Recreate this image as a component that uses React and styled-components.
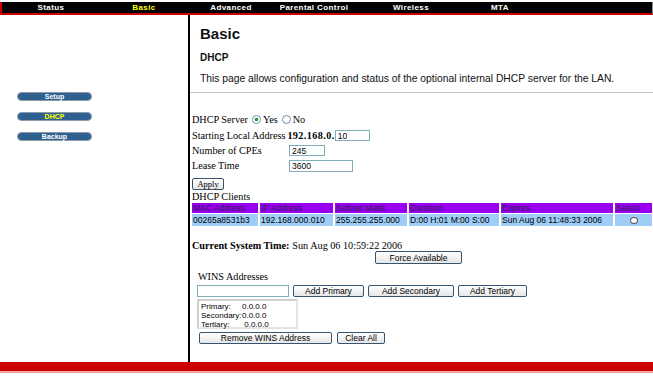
import React from "react";
import styled, { createGlobalStyle } from "styled-components";

const GlobalStyle = createGlobalStyle`
  html, body {
    margin: 0;
    padding: 0;
    background: #fff;
  }
  body {
    width: 653px;
    height: 379px;
    overflow: hidden;
    font-family: "Liberation Serif", "Times New Roman", serif;
  }
`;

const Page = styled.div`
  display: flex;
  flex-direction: column;
  width: 653px;
  height: 379px;
`;

const TopBar = styled.div`
  display: flex;
  margin-top: 2px;
  height: 11px;
  background: #000;
  border-left: 2px solid #cc0000;
  border-right: 1px solid #888;
  border-bottom: 2px solid #cc0000;
  padding-left: 4px;
`;

const NavItem = styled.div`
  width: ${(p) => p.$w}px;
  text-align: center;
  font-family: "Liberation Sans", Arial, sans-serif;
  font-weight: bold;
  font-size: 8px;
  line-height: 11px;
  letter-spacing: 0.4px;
  color: ${(p) => (p.$active ? "#ffff00" : "#fff")};
`;

const Body = styled.div`
  display: flex;
  height: 347px;
`;

const Sidebar = styled.div`
  width: 190px;
  flex-shrink: 0;
  border-right: 2px solid #000;
  display: flex;
  flex-direction: column;
  gap: 11px;
  padding: 77px 0 0 17px;
  box-sizing: border-box;
`;

const SideButton = styled.div`
  width: 75px;
  height: 9px;
  box-sizing: border-box;
  border: 1px solid #8c9aa8;
  border-radius: 5px;
  background: #2f6190;
  color: ${(p) => (p.$active ? "#ffff00" : "#fff")};
  font-family: "Liberation Sans", Arial, sans-serif;
  font-weight: bold;
  font-size: 7px;
  line-height: 7px;
  text-align: center;
`;

const Main = styled.div`
  flex: 1;
  display: flex;
  flex-direction: column;
`;

const Header = styled.div`
  padding-left: 10px;
  font-family: "Liberation Sans", Arial, sans-serif;
`;

const Title = styled.div`
  margin-top: 10px;
  font-size: 15px;
  font-weight: bold;
  line-height: 17px;
  color: #111;
`;

const SubTitle = styled.div`
  margin-top: 10px;
  font-size: 10px;
  font-weight: bold;
  line-height: 12px;
  color: #111;
`;

const Description = styled.div`
  margin-top: 9px;
  font-size: 10.3px;
  line-height: 12px;
  color: #111;
`;

const Rule = styled.div`
  margin-top: 7px;
  height: 1px;
  background: #c4c4c4;
`;

const Form = styled.div`
  padding-left: 2px;
  display: flex;
  flex-direction: column;
  font-size: 10.2px;
  color: #000;
`;

const Row = styled.div`
  display: flex;
  align-items: center;
  height: ${(p) => p.$h || 15}px;
  margin-top: ${(p) => p.$mt || 0}px;
  padding-left: ${(p) => p.$pl || 0}px;
  gap: ${(p) => p.$gap || 0}px;
`;

const Label = styled.span`
  display: inline-block;
  width: ${(p) => (p.$w ? `${p.$w}px` : "auto")};
  font-weight: ${(p) => (p.$bold ? "bold" : "normal")};
  letter-spacing: ${(p) => p.$ls || 0}px;
  white-space: nowrap;
`;

const Radio = styled.span`
  display: inline-block;
  width: 7px;
  height: 7px;
  border-radius: 50%;
  border: 1px solid #6f8fb3;
  background: ${(p) => (p.$on ? "radial-gradient(circle, #2f9b3a 0 1.6px, #fff 2.2px)" : "#fff")};
  margin: 0 2px 0 4px;
`;

const TextInput = styled.input`
  box-sizing: border-box;
  width: ${(p) => p.$w}px;
  height: ${(p) => p.$h || 11}px;
  border: 1px solid #7fb0b8;
  padding: 0 2px;
  font-family: "Liberation Sans", Arial, sans-serif;
  font-size: 8.5px;
  color: #000;
  outline: none;
  background: #fff;
`;

const Button = styled.button`
  box-sizing: border-box;
  width: ${(p) => p.$w}px;
  height: ${(p) => p.$h || 12}px;
  padding: 0;
  border: 1px solid #34546f;
  border-radius: 2px;
  background: linear-gradient(#ffffff, #e6e6e6);
  font-family: ${(p) =>
    p.$serif ? `"Liberation Serif", "Times New Roman", serif` : `"Liberation Sans", Arial, sans-serif`};
  font-size: 8.5px;
  line-height: 10px;
  color: #000;
`;

const Table = styled.div`
  display: grid;
  grid-template-columns: 66px 73px 72px 90px 112px 37px;
  column-gap: 2px;
  row-gap: 1px;
  margin-top: 1px;
  font-family: "Liberation Sans", Arial, sans-serif;
  font-size: 8.5px;
`;

const HeadCell = styled.div`
  height: 10px;
  line-height: 10px;
  background: #9900f0;
  color: #2b2250;
  padding-left: 1px;
  white-space: nowrap;
  overflow: hidden;
`;

const Cell = styled.div`
  height: 12px;
  line-height: 12px;
  background: #9fcdf6;
  color: #000;
  padding-left: 1px;
  white-space: nowrap;
  overflow: hidden;
  display: flex;
  align-items: center;
  justify-content: ${(p) => (p.$center ? "center" : "flex-start")};
`;

const SmallRadio = styled.span`
  display: inline-block;
  width: 6px;
  height: 5px;
  border-radius: 50%;
  border: 1px solid #555;
  background: #fff;
`;

const WinsBlock = styled.div`
  margin-left: 5px;
  display: flex;
  flex-direction: column;
`;

const ListBox = styled.div`
  box-sizing: border-box;
  width: 101px;
  height: 30px;
  margin-top: 2px;
  border: 2px solid #cfcfcf;
  border-right-color: #e4e4e4;
  border-bottom-color: #e4e4e4;
  padding: 1px 2px;
  font-family: "Liberation Sans", Arial, sans-serif;
  font-size: 8px;
  line-height: 9px;
`;

const ListLine = styled.div`
  display: grid;
  grid-template-columns: 41px auto;
`;

const Footer = styled.div`
  height: 9px;
  background: #cc0000;
  border-bottom: 2px solid #f2a2a2;
`;

const navItems = [
  ["Status", 90],
  ["Basic", 96],
  ["Advanced", 78],
  ["Parental Control", 88],
  ["Wireless", 106],
  ["MTA", 72],
];

const clientHeaders = ["MAC Address", "IP Address", "Subnet Mask", "Duration", "Expires", "Select"];
const client = ["00265a8531b3", "192.168.000.010", "255.255.255.000", "D:00 H:01 M:00 S:00", "Sun Aug 06 11:48:33 2006"];

export default function App() {
  return (
    <Page>
      <GlobalStyle />
      <TopBar>
        {navItems.map(([name, w]) => (
          <NavItem key={name} $w={w} $active={name === "Basic"}>
            {name}
          </NavItem>
        ))}
      </TopBar>
      <Body>
        <Sidebar>
          <SideButton>Setup</SideButton>
          <SideButton $active>DHCP</SideButton>
          <SideButton>Backup</SideButton>
        </Sidebar>
        <Main>
          <Header>
            <Title>Basic</Title>
            <SubTitle>DHCP</SubTitle>
            <Description>
              This page allows configuration and status of the optional internal DHCP server for the LAN.
            </Description>
          </Header>
          <Rule />
          <Form>
            <Row $h={14} $mt={19}>
              <Label>DHCP Server</Label>
              <Radio $on />
              <Label>Yes</Label>
              <Radio />
              <Label>No</Label>
            </Row>
            <Row $mt={2}>
              <Label>Starting Local Address</Label>
              <Label $bold $ls={0.4} style={{ marginLeft: 2 }}>192.168.0.</Label>
              <TextInput $w={35} defaultValue="10" readOnly />
            </Row>
            <Row>
              <Label $w={97}>Number of CPEs</Label>
              <TextInput $w={36} defaultValue="245" readOnly />
            </Row>
            <Row>
              <Label $w={97}>Lease Time</Label>
              <TextInput $w={64} $h={12} defaultValue="3600" readOnly />
            </Row>
            <Row $h={11} $mt={5}>
              <Button $w={32} $h={12} $serif>Apply</Button>
            </Row>
            <Row $h={11} $mt={2}>
              <Label>DHCP Clients</Label>
            </Row>
            <Table>
              {clientHeaders.map((h) => (
                <HeadCell key={h}>{h}</HeadCell>
              ))}
              {client.map((c) => (
                <Cell key={c}>{c}</Cell>
              ))}
              <Cell $center>
                <SmallRadio />
              </Cell>
            </Table>
            <Row $h={12} $mt={13}>
              <Label $bold>Current System Time:</Label>
              <Label style={{ marginLeft: 3 }}>Sun Aug 06 10:59:22 2006</Label>
            </Row>
            <Row $h={13} $pl={183}>
              <Button $w={87} $h={13}>Force Available</Button>
            </Row>
            <WinsBlock>
              <Row $h={12} $mt={6} $pl={1}>
                <Label>WINS Addresses</Label>
              </Row>
              <Row $h={12} $mt={3} $gap={4}>
                <TextInput $w={92} $h={12} readOnly />
                <Button $w={71}>Add Primary</Button>
                <Button $w={86}>Add Secondary</Button>
                <Button $w={69}>Add Tertiary</Button>
              </Row>
              <ListBox>
                <ListLine><span>Primary:</span><span>0.0.0.0</span></ListLine>
                <ListLine><span>Secondary:</span><span>0.0.0.0</span></ListLine>
                <ListLine><span>Tertiary:</span><span>&nbsp;0.0.0.0</span></ListLine>
              </ListBox>
              <Row $h={12} $mt={3} $pl={2} $gap={5}>
                <Button $w={133}>Remove WINS Address</Button>
                <Button $w={48}>Clear All</Button>
              </Row>
            </WinsBlock>
          </Form>
        </Main>
      </Body>
      <Footer />
    </Page>
  );
}
